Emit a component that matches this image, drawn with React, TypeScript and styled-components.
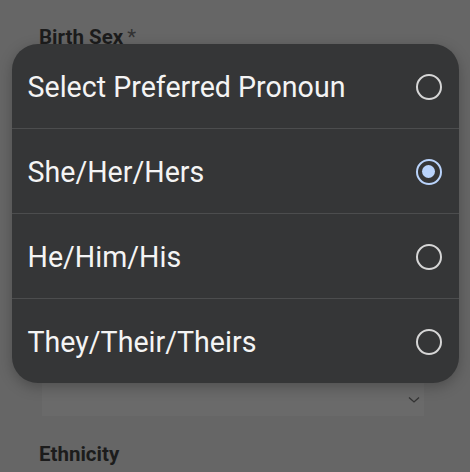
import * as React from 'react'
import styled, { createGlobalStyle } from 'styled-components'

const GlobalStyle = createGlobalStyle`
  html, body {
    margin: 0;
    padding: 0;
    background: #666666;
    font-family: Roboto, "Liberation Sans", sans-serif;
  }
`

const Page = styled.div`
  position: relative;
  width: 470px;
  height: 472px;
  overflow: hidden;
  background: #666666;
`

const Form = styled.div`
  display: flex;
  flex-direction: column;
  padding: 25px 46px 0 39px;
`

const Label = styled.div<{ $top?: number }>`
  font-size: 20.5px;
  font-weight: 700;
  color: #1c1c1c;
  margin-top: ${props => props.$top || 0}px;
  line-height: 24px;
`

const Required = styled.span`
  font-weight: 400;
  color: #333;
  margin-left: 4px;
`

const SelectBox = styled.div<{ $top: number }>`
  margin-top: ${props => props.$top}px;
  margin-left: 3px;
  height: 33px;
  background: #6a6a6a;
  display: flex;
  align-items: center;
  justify-content: flex-end;
  padding-right: 4px;
`

const Backdrop = styled.div`
  position: absolute;
  inset: 0;
  display: flex;
  align-items: flex-start;
  justify-content: center;
  padding-top: 44px;
`

const Dialog = styled.div`
  width: 447px;
  background: #353637;
  border-radius: 26px;
  overflow: hidden;
  box-shadow: 0 4px 14px rgba(0, 0, 0, 0.25);
`

const Option = styled.div`
  box-sizing: border-box;
  height: 85px;
  display: flex;
  align-items: center;
  justify-content: space-between;
  padding: 1px 17px 0 16px;
  border-top: 1px solid #4c4d4e;
  &:first-child {
    border-top: none;
    height: 84px;
  }
  color: #f4f4f4;
  font-size: 28.6px;
`

const Radio = styled.span<{ $checked: boolean }>`
  width: 26px;
  height: 26px;
  box-sizing: border-box;
  border-radius: 50%;
  border: 2.5px solid ${props => (props.$checked ? '#b9d3fb' : '#d6d6d6')};
  display: flex;
  align-items: center;
  justify-content: center;
  &::after {
    content: '';
    display: ${props => (props.$checked ? 'block' : 'none')};
    width: 13px;
    height: 13px;
    border-radius: 50%;
    background: #b9d3fb;
  }
`

const Chevron = () => (
  <svg width="12" height="8" viewBox="0 0 12 8">
    <path d="M1 1.5 L6 6 L11 1.5" stroke="#333" strokeWidth="1.3" fill="none" />
  </svg>
)

const options = [
  'Select Preferred Pronoun',
  'She/Her/Hers',
  'He/Him/His',
  'They/Their/Theirs',
]

export default function App() {
  const selected = 1
  return (
    <Page>
      <GlobalStyle />
      <Form>
        <Label>
          Birth Sex<Required>*</Required>
        </Label>
        <SelectBox $top={334}>
          <Chevron />
        </SelectBox>
        <Label $top={26}>Ethnicity</Label>
      </Form>
      <Backdrop>
        <Dialog>
          {options.map((o, i) => (
            <Option key={o}>
              {o}
              <Radio $checked={i === selected} />
            </Option>
          ))}
        </Dialog>
      </Backdrop>
    </Page>
  )
}
